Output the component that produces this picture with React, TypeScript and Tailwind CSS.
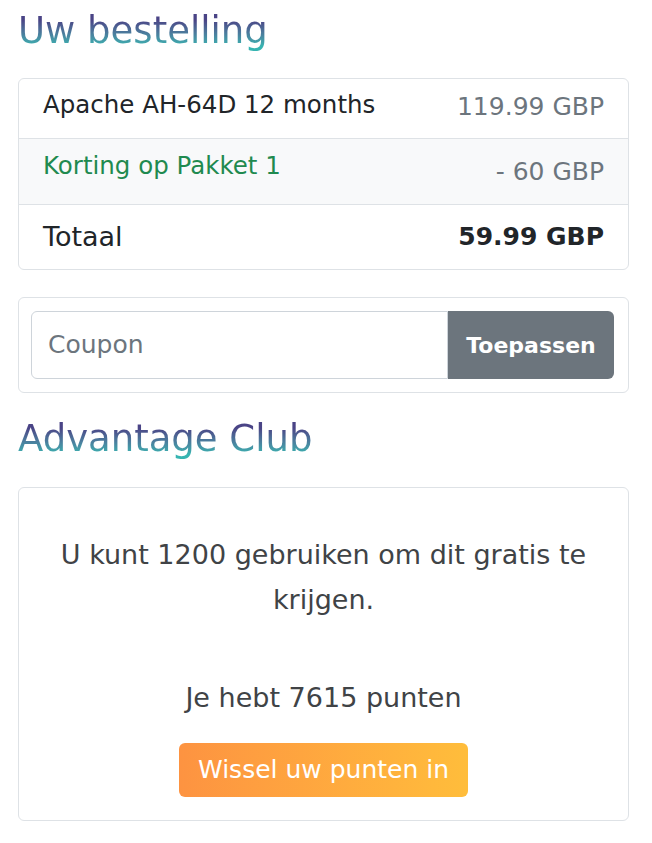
const FONT = "font-['DejaVu_Sans','Liberation_Sans',sans-serif]";

function GradientHeading({ children }: { children: string }) {
  return (
    <h2 className="inline-block bg-gradient-to-b from-[#4a4486] from-25% to-[#36b4b1] to-85% bg-clip-text text-[37px] leading-[44px] text-transparent">
      {children}
    </h2>
  );
}

export default function App() {
  return (
    <div className={`${FONT} min-h-[843px] bg-white text-[#212529]`}>
      <div className="ml-[18px] w-[611px] pt-[9px]">
        {/* Order summary */}
        <GradientHeading>Uw bestelling</GradientHeading>

        <div className="mt-[25px] overflow-hidden rounded-[6px] border border-[#dee2e6]">
          <div className="flex h-[59px] items-start justify-between px-[24px]">
            <span className="mt-[11px] text-[24.5px] leading-[30px]">Apache AH-64D 12 months</span>
            <span className="mt-[13px] text-[25px] leading-[30px] text-[#6c757d]">119.99 GBP</span>
          </div>
          <div className="flex h-[66px] items-start justify-between border-t border-[#dee2e6] bg-[#f8f9fa] px-[24px]">
            <span className="mt-[12px] text-[24.5px] leading-[30px] text-[#1f8a4f]">Korting op Pakket 1</span>
            <span className="mt-[18px] text-[25px] leading-[30px] text-[#6c757d]">- 60 GBP</span>
          </div>
          <div className="flex h-[65px] items-center justify-between border-t border-[#dee2e6] px-[24px]">
            <span className="text-[27px] leading-[30px]">Totaal</span>
            <span className="text-[25px] font-bold leading-[30px]">59.99 GBP</span>
          </div>
        </div>

        {/* Coupon */}
        <div className="mt-[27px] rounded-[6px] border border-[#dee2e6] py-[13px] pl-[12px] pr-[14px]">
          <div className="flex h-[68px]">
            <input
              placeholder="Coupon"
              className="min-w-0 flex-1 rounded-l-[6px] border border-[#ced4da] px-[16px] text-[25px] text-[#212529] outline-none placeholder:text-[#6c757d]"
            />
            <button className="w-[166px] rounded-r-[6px] bg-[#6c757d] text-[22px] font-bold text-white">
              Toepassen
            </button>
          </div>
        </div>

        {/* Advantage club */}
        <div className="mt-[24px]">
          <GradientHeading>Advantage Club</GradientHeading>
        </div>

        <div className="mt-[26px] flex flex-col items-center rounded-[6px] border border-[#dee2e6] px-[30px] pb-[23px] pt-[44px] text-center text-[#404346]">
          <p className="text-[27px] leading-[45px]">
            U kunt 1200 gebruiken om dit gratis te krijgen.
          </p>
          <p className="mt-[58px] text-[27px] leading-[36px]">Je hebt 7615 punten</p>
          <button className="mt-[27px] h-[54px] rounded-[6px] bg-gradient-to-r from-[#fd9341] to-[#ffbd3b] px-[19px] text-[25px] text-white">
            Wissel uw punten in
          </button>
        </div>
      </div>
    </div>
  );
}
